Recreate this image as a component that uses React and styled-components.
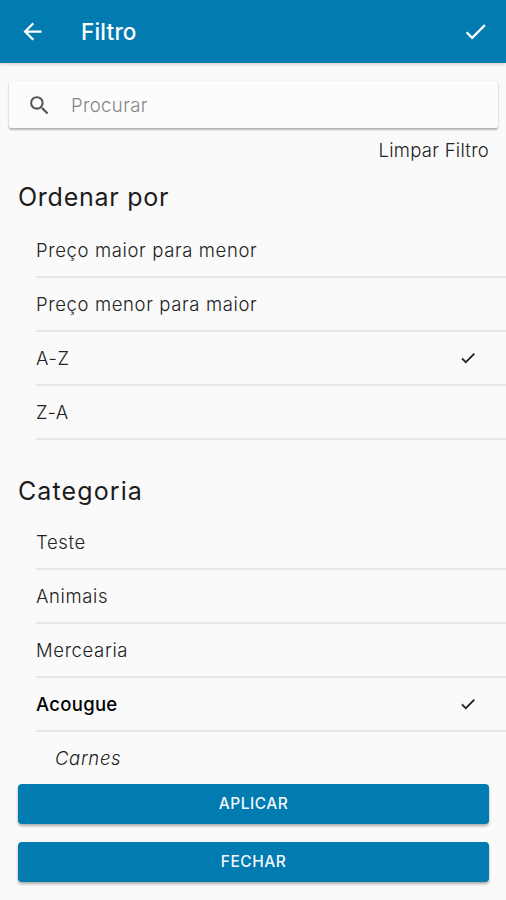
import React, { useState } from 'react';
import styled, { createGlobalStyle } from 'styled-components';

const GlobalStyle = createGlobalStyle`
  * {
    box-sizing: border-box;
  }

  body {
    margin: 0;
    background-color: #fafafa;
    font-family: Inter, sans-serif;
    color: #1c1c1c;
  }
`;

const Page = styled.div`
  display: flex;
  flex-direction: column;
  height: 100vh;
  overflow: hidden;
`;

const Header = styled.header`
  display: flex;
  align-items: center;
  flex-shrink: 0;
  height: 63px;
  margin-bottom: 1px;
  padding: 0 17px 0 19px;
  background-color: #027bb0;
  color: #fff;
  box-shadow: 0 1px 4px rgba(90, 50, 50, 0.25);
`;

const Title = styled.h1`
  flex-grow: 1;
  margin: 0 0 0 35px;
  font-size: 22.5px;
  font-weight: 500;
  line-height: 61px;
  letter-spacing: 0.2px;
`;

const IconButton = styled.button`
  display: flex;
  padding: 0;
  border: none;
  background: none;
  color: inherit;
  cursor: pointer;
`;

const SearchBar = styled.label`
  display: flex;
  align-items: center;
  flex-shrink: 0;
  height: 47px;
  margin: 17px 8px 0 9px;
  padding: 1px 17px 0 18px;
  background-color: #fcfcfc;
  border-radius: 2px;
  box-shadow: 0 2px 2px rgba(0, 0, 0, 0.27), 0 0 2px rgba(0, 0, 0, 0.1);
  color: #555;
`;

const SearchInput = styled.input`
  flex-grow: 1;
  margin-left: 19px;
  padding: 0 0 1px;
  border: none;
  outline: none;
  background: none;
  font-family: inherit;
  font-size: 18.5px;
  font-weight: 300;
  letter-spacing: 0.4px;

  &::placeholder {
    color: #858585;
    opacity: 1;
  }
`;

const ClearButton = styled.button`
  align-self: flex-end;
  flex-shrink: 0;
  height: 44px;
  padding: 0 17px 0 0;
  border: none;
  background: none;
  color: #222;
  font-family: inherit;
  font-size: 18.5px;
  font-weight: 300;
  letter-spacing: 0.27px;
  cursor: pointer;
`;

const Content = styled.main`
  flex: 1;
  min-height: 0;
  overflow: hidden;
`;

const Section = styled.section`
  margin-bottom: 26px;
`;

const SectionTitle = styled.h2`
  height: ${(props) => (props.$compact ? 50 : 52)}px;
  margin: 0;
  padding-left: 18px;
  font-size: 25px;
  font-weight: 400;
  line-height: 50px;
  letter-spacing: ${(props) => (props.$compact ? 1.1 : 0.75)}px;
`;

const Option = styled.div`
  display: flex;
  align-items: center;
  justify-content: space-between;
  height: 54px;
  margin-left: 36px;
  padding: 0 29px 0 ${(props) => (props.$child ? 19 : 0)}px;
  border-bottom: 2px solid #e7e7e7;
  color: ${(props) => (props.$strong ? '#000' : '#222')};
  font-size: 18.5px;
  font-style: ${(props) => (props.$child ? 'italic' : 'normal')};
  font-weight: ${(props) => (props.$strong ? 500 : 300)};
  letter-spacing: ${(props) => (props.$strong ? 0.3 : 0.63)}px;
  cursor: pointer;
`;

const SelectedIcon = styled.svg`
  fill: #1c1c1c;
  stroke: #1c1c1c;
  stroke-width: 0.6;
`;

const Footer = styled.footer`
  display: flex;
  flex-direction: column;
  flex-shrink: 0;
  gap: 18px;
  padding: 0 17px 18px 18px;
`;

const ActionButton = styled.button`
  height: 40px;
  padding: 0 0 2px;
  border: none;
  border-radius: 4px;
  background-color: #027bb0;
  box-shadow: 0 2px 3px rgba(0, 0, 0, 0.32);
  color: #f2f8fc;
  font-family: inherit;
  font-size: 15.5px;
  font-weight: 500;
  letter-spacing: 0.5px;
  cursor: pointer;
`;

const BACK = 'M20 11H7.83l5.59-5.59L12 4l-8 8 8 8 1.41-1.41L7.83 13H20v-2z';
const CHECK = 'M9 16.17L4.83 12l-1.42 1.41L9 19 21 7l-1.41-1.41z';
const SEARCH =
  'M15.5 14h-.79l-.28-.27A6.47 6.47 0 0 0 16 9.5 6.5 6.5 0 1 0 9.5 16c1.61 0 3.09-.59 4.23-1.57l.27.28v.79l5 4.99L20.49 19l-4.99-5zm-6 0C7.01 14 5 11.99 5 9.5S7.01 5 9.5 5 14 7.01 14 9.5 11.99 14 9.5 14z';

const Icon = ({ size, path }) => (
  <svg width={size} height={size} viewBox="0 0 24 24" fill="currentColor">
    <path d={path} />
  </svg>
);

const SelectedCheck = () => (
  <SelectedIcon width="18" height="18" viewBox="0 0 24 24">
    <path d={CHECK} />
  </SelectedIcon>
);

const orders = ['Preço maior para menor', 'Preço menor para maior', 'A-Z', 'Z-A'];

const categories = [
  { name: 'Teste' },
  { name: 'Animais' },
  { name: 'Mercearia' },
  { name: 'Acougue' },
  { name: 'Carnes', child: true },
];

function App() {
  const [search, setSearch] = useState('');
  const [order, setOrder] = useState('A-Z');
  const [category, setCategory] = useState('Acougue');

  const handleClear = () => {
    setSearch('');
    setOrder('');
    setCategory('');
  };

  return (
    <Page>
      <GlobalStyle />
      <Header>
        <IconButton aria-label="Voltar">
          <Icon size={27} path={BACK} />
        </IconButton>
        <Title>Filtro</Title>
        <IconButton aria-label="Aplicar">
          <Icon size={27} path={CHECK} />
        </IconButton>
      </Header>
      <SearchBar>
        <Icon size={25} path={SEARCH} />
        <SearchInput
          placeholder="Procurar"
          value={search}
          onChange={(event) => setSearch(event.target.value)}
        />
      </SearchBar>
      <ClearButton onClick={handleClear}>Limpar Filtro</ClearButton>
      <Content>
        <Section>
          <SectionTitle>Ordenar por</SectionTitle>
          {orders.map((name) => (
            <Option key={name} onClick={() => setOrder(name)}>
              {name}
              {order === name && <SelectedCheck />}
            </Option>
          ))}
        </Section>
        <Section>
          <SectionTitle $compact>Categoria</SectionTitle>
          {categories.map((item) => (
            <Option
              key={item.name}
              $child={item.child}
              $strong={category === item.name}
              onClick={() => setCategory(item.name)}
            >
              {item.name}
              {category === item.name && <SelectedCheck />}
            </Option>
          ))}
        </Section>
      </Content>
      <Footer>
        <ActionButton>APLICAR</ActionButton>
        <ActionButton>FECHAR</ActionButton>
      </Footer>
    </Page>
  );
}

export default App;
